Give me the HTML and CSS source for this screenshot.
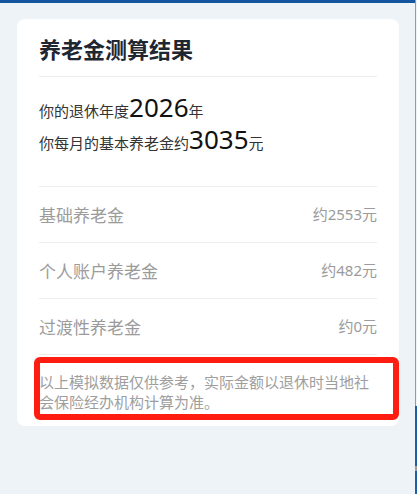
FILE: index.html
```html
<!DOCTYPE html>
<html lang="zh-CN">
<head>
<meta charset="utf-8">
<title>养老金测算结果</title>
<link rel="stylesheet" href="styles.css">
</head>
<body>
<div class="page">
  <div class="main">
    <div class="topbar"></div>
    <div class="content">
      <section class="card">
        <h1 class="title">养老金测算结果</h1>
        <div class="info">
          <div class="info-line">你的退休年度<span class="big">2026</span>年</div>
          <div class="info-line">你每月的基本养老金约<span class="big">3035</span>元</div>
        </div>
        <div class="row"><span class="label">基础养老金</span><span class="value">约2553元</span></div>
        <div class="row"><span class="label">个人账户养老金</span><span class="value">约482元</span></div>
        <div class="row"><span class="label">过渡性养老金</span><span class="value">约0元</span></div>
        <div class="note">
          <p class="note-text">以上模拟数据仅供参考，实际金额以退休时当地社会保险经办机构计算为准。</p>
          <div class="highlight"></div>
        </div>
      </section>
    </div>
  </div>
  <div class="edge">
    <div class="edge-a"></div>
    <div class="edge-b"></div>
    <div class="edge-c"></div>
    <div class="edge-d"></div>
  </div>
</div>
</body>
</html>
```

FILE: styles.css
```css
* { box-sizing: border-box; }
html, body {
  margin: 0;
  padding: 0;
  background: #eef3f7;
}
body {
  font-family: "Noto Sans", "Noto Sans CJK SC", sans-serif;
  color: #333;
}
.page {
  display: flex;
  height: 494px;
  overflow: hidden;
}
.main {
  flex: 1;
  display: flex;
  flex-direction: column;
}
.topbar {
  height: 3px;
  background: #15559f;
}
.content {
  padding: 16px 16px 0 17px;
}
.card {
  background: #fff;
  border-radius: 8px;
  padding: 0 22px 0 22px;
}
.title {
  margin: 0;
  padding: 15px 0 12px;
  font-size: 22px;
  line-height: 30px;
  font-weight: 700;
  color: #1e2632;
  border-bottom: 1px solid #ececec;
}
.info {
  padding: 18px 0 27px;
  font-size: 15px;
  color: #333;
}
.info-line {
  line-height: 32px;
  height: 32px;
}
.big {
  font-size: 26px;
  line-height: 0;
  color: #111;
}
.row {
  display: flex;
  justify-content: space-between;
  align-items: center;
  height: 56px;
  border-top: 1px solid #ececec;
}
.label {
  font-size: 17px;
  color: #9b9b9b;
}
.value {
  font-size: 15px;
  color: #9b9b9b;
  margin-top: -3px;
}
.note {
  position: relative;
  border-top: 1px solid #ececec;
  padding: 17px 0 14px;
}
.note-text {
  margin: 0;
  font-size: 15px;
  line-height: 20px;
  color: #9e9e9e;
}
.highlight {
  position: absolute;
  top: 2px;
  left: -5px;
  right: -22px;
  height: 63px;
  border: 6px solid #ff1d12;
  border-radius: 6px;
}
.edge {
  width: 2px;
  display: flex;
  flex-direction: column;
}
.edge-a {
  height: 406px;
  border-left: 1px solid #9a9a9a;
  background: #eef3f7;
}
.edge-b {
  height: 60px;
  background: #1a5fa8;
}
.edge-c {
  height: 5px;
  background: #9a9a9a;
}
.edge-d {
  flex: 1;
  background: #1a5fa8;
}
```
